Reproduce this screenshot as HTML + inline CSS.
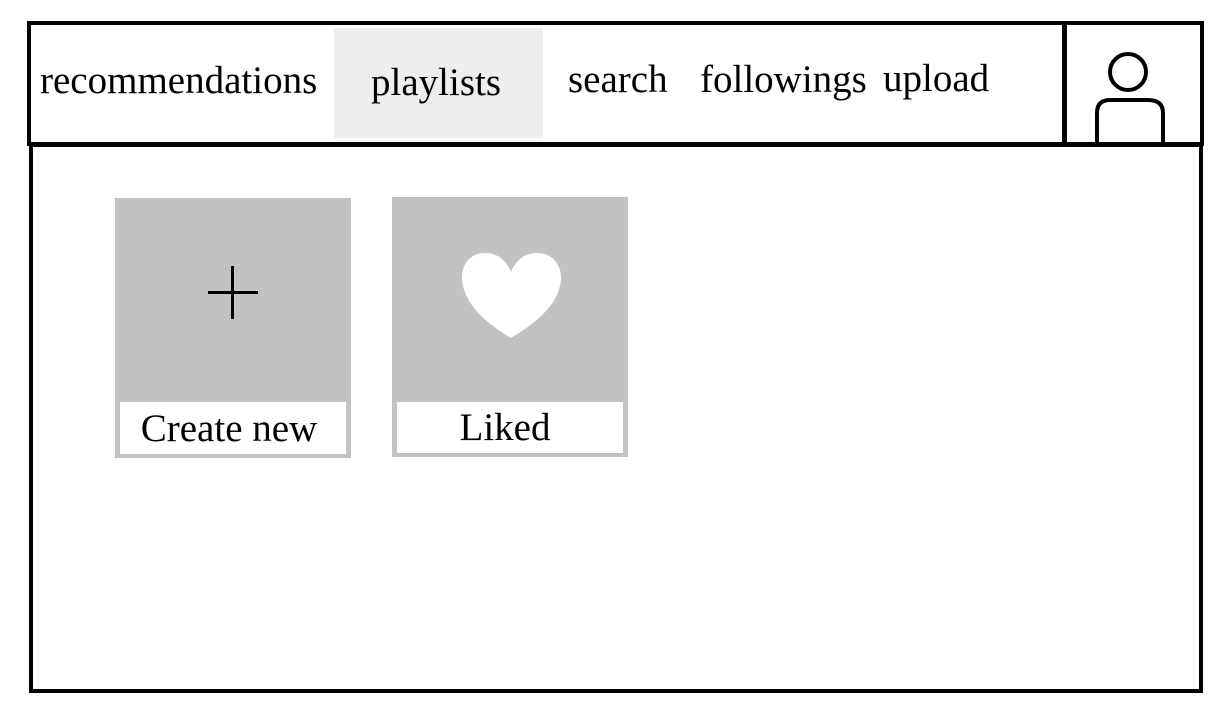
<!DOCTYPE html>
<html><head><style>
html,body{margin:0;padding:0;background:#fff;width:1232px;height:718px;overflow:hidden;position:relative;font-family:"Liberation Serif",serif;color:#000}
.a{position:absolute}
.t{position:absolute;font-size:39px;line-height:1;white-space:nowrap}
</style></head><body>
<div class="a" style="left:29px;top:143px;width:1166px;height:542px;border:4px solid #000"></div>
<div class="a" style="left:27px;top:21px;width:1169px;height:117px;border:4px solid #000;background:#fff"></div>
<div class="a" style="left:334px;top:28px;width:209px;height:110px;background:#eee"></div>
<div class="a" style="left:1062px;top:24px;width:5px;height:120px;background:#000"></div>
<div class="t" style="left:40px;top:61px">recommendations</div>
<div class="t" style="left:371px;top:63px">playlists</div>
<div class="t" style="left:568px;top:60px">search</div>
<div class="t" style="left:700px;top:60px">followings</div>
<div class="t" style="left:883px;top:59px">upload</div>
<svg class="a" style="left:1067px;top:25px" width="130" height="118">
<circle cx="61" cy="47" r="18" fill="none" stroke="#000" stroke-width="4"/>
<path d="M30 120 V88 Q30 75 43 75 H81 Q96 75 96 88 V120" fill="none" stroke="#000" stroke-width="4"/>
</svg>
<div class="a" style="left:115px;top:198px;width:236px;height:260px;background:#c2c2c2"></div>
<div class="a" style="left:120px;top:402px;width:226px;height:52px;background:#fff"></div>
<div class="t" style="left:116px;top:409px;width:226px;text-align:center">Create new</div>
<div class="a" style="left:208px;top:291px;width:50px;height:3px;background:#000"></div>
<div class="a" style="left:231px;top:266px;width:3px;height:53px;background:#000"></div>
<div class="a" style="left:392px;top:197px;width:236px;height:260px;background:#c2c2c2"></div>
<div class="a" style="left:397px;top:402px;width:226px;height:51px;background:#fff"></div>
<div class="t" style="left:397px;top:408px;width:216px;text-align:center">Liked</div>
<svg class="a" style="left:455px;top:250px" width="112" height="92">
<path d="M56 88 C40 78 8 58 7 28 C7 13 16 3 30 3 C44 3 52 12 56 22 C60 12 68 3 82 3 C96 3 106 13 106 28 C105 58 72 78 56 88 Z" fill="#fff"/>
</svg>
</body></html>
